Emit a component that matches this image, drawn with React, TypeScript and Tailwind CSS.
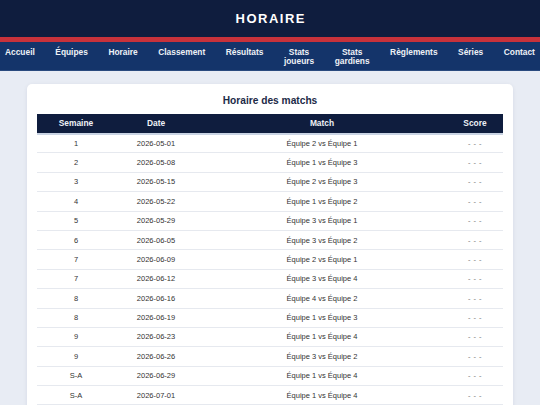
const navItems: string[][] = [
  ["Accueil"],
  ["Équipes"],
  ["Horaire"],
  ["Classement"],
  ["Résultats"],
  ["Stats", "joueurs"],
  ["Stats", "gardiens"],
  ["Règlements"],
  ["Séries"],
  ["Contact"],
];

const matches = [
  { week: "1", date: "2026-05-01", match: "Équipe 2 vs Équipe 1" },
  { week: "2", date: "2026-05-08", match: "Équipe 1 vs Équipe 3" },
  { week: "3", date: "2026-05-15", match: "Équipe 2 vs Équipe 3" },
  { week: "4", date: "2026-05-22", match: "Équipe 1 vs Équipe 2" },
  { week: "5", date: "2026-05-29", match: "Équipe 3 vs Équipe 1" },
  { week: "6", date: "2026-06-05", match: "Équipe 3 vs Équipe 2" },
  { week: "7", date: "2026-06-09", match: "Équipe 2 vs Équipe 1" },
  { week: "7", date: "2026-06-12", match: "Équipe 3 vs Équipe 4" },
  { week: "8", date: "2026-06-16", match: "Équipe 4 vs Équipe 2" },
  { week: "8", date: "2026-06-19", match: "Équipe 1 vs Équipe 3" },
  { week: "9", date: "2026-06-23", match: "Équipe 1 vs Équipe 4" },
  { week: "9", date: "2026-06-26", match: "Équipe 3 vs Équipe 2" },
  { week: "S-A", date: "2026-06-29", match: "Équipe 1 vs Équipe 4" },
  { week: "S-A", date: "2026-07-01", match: "Équipe 1 vs Équipe 4" },
];

export default function App() {
  return (
    <div className="min-h-screen bg-[#e8ecf4] font-['Liberation_Sans',Arial,sans-serif]">
      {/* top banner */}
      <header className="flex h-[37px] items-center justify-center bg-[#0f1d3e]">
        <h1 className="pl-[1.5px] text-[13px] font-bold tracking-[1.5px] text-white">HORAIRE</h1>
      </header>
      <div className="h-[4.5px] bg-[#c8323b]" />

      <nav className="flex items-start justify-between border-b border-[#2a4a7e] bg-[#14346a] px-[5px] pt-[6px] pb-[3px]">
        {navItems.map((lines) => (
          <a
            key={lines.join(" ")}
            className="text-center text-[8.4px] leading-[9.5px] font-bold text-[#eef1f6]"
          >
            {lines.map((l) => (
              <div key={l}>{l}</div>
            ))}
          </a>
        ))}
      </nav>

      <main className="px-[27px] pt-[13px]">
        <section className="rounded-[5px] bg-white px-[10px] pt-[10px] pb-[10px] shadow-[0_1px_4px_rgba(15,29,62,0.08)]">
          <h2 className="mb-[7px] text-center text-[10.2px] leading-[13px] font-bold text-[#1c2a47]">
            Horaire des matchs
          </h2>
          <table className="w-full table-fixed border-collapse">
            <thead>
              <tr className="border-b-2 border-[#c9d3e3] bg-[#0f1d3e] text-[8.4px] font-bold text-[#eef1f6]">
                <th className="w-[78px] h-[20px] font-bold">Semaine</th>
                <th className="w-[82px] font-bold">Date</th>
                <th className="font-bold">Match</th>
                <th className="w-[56px] font-bold">Score</th>
              </tr>
            </thead>
            <tbody>
              {matches.map((m, i) => (
                <tr key={i} className="border-b border-[#e6e9ef] text-center text-[7.5px] text-[#333]">
                  <td className="h-[19.4px]">{m.week}</td>
                  <td>{m.date}</td>
                  <td>{m.match}</td>
                  <td className="text-[#777] tracking-[0.5px]">- - -</td>
                </tr>
              ))}
            </tbody>
          </table>
        </section>
      </main>
    </div>
  );
}
